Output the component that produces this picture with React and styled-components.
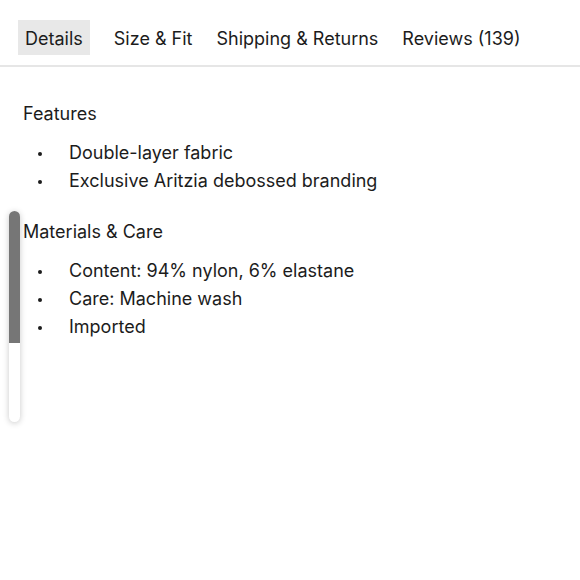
import React from "react";
import styled, { createGlobalStyle } from "styled-components";

const Global = createGlobalStyle`
  html, body { margin: 0; padding: 0; background: #fff; }
  body { font-family: "Inter", "Liberation Sans", sans-serif; color: #1c1c1c; }
`;

const Page = styled.div`
  position: relative;
  width: 580px;
  height: 580px;
  overflow: hidden;
  background: #fff;
`;

const TabBar = styled.nav`
  display: flex;
  align-items: center;
  gap: 24px;
  padding: 20px 0 10px 18px;
  border-bottom: 2px solid #e6e6e6;
`;

const Tab = styled.div`
  box-sizing: border-box;
  height: 35px;
  display: flex;
  align-items: center;
  padding: 2px ${(p) => (p.$active ? "7px" : "0")} 0;
  font-size: 18px;
  color: #1c1c1c;
  background: ${(p) => (p.$active ? "#e8e8e8" : "transparent")};
`;

const Content = styled.div`
  padding: 34px 0 0 23px;
`;

const Section = styled.section`
  margin-bottom: 25px;
`;

const Heading = styled.h3`
  margin: 0 0 11px;
  font-size: 18px;
  font-weight: 400;
  line-height: 26px;
  color: #1c1c1c;
`;

const List = styled.ul`
  margin: 0;
  padding: 0;
  list-style: none;
`;

const Item = styled.li`
  display: flex;
  align-items: center;
  height: 28px;
  font-size: 18px;
  color: #1c1c1c;
  &::before {
    content: "";
    width: 4px;
    height: 4px;
    border-radius: 50%;
    background: #1c1c1c;
    margin: 3px 27px 0 15px;
    flex: none;
  }
`;

const Scrollbar = styled.div`
  position: absolute;
  left: 9px;
  top: 211px;
  width: 11px;
  height: 211px;
  border-radius: 6px;
  background: #fff;
  box-shadow: 0 1px 6px rgba(0, 0, 0, 0.22);
  overflow: hidden;
`;

const Thumb = styled.div`
  height: 132px;
  background: #767676;
`;

const tabs = ["Details", "Size & Fit", "Shipping & Returns", "Reviews (139)"];

const sections = [
  { title: "Features", items: ["Double-layer fabric", "Exclusive Aritzia debossed branding"] },
  {
    title: "Materials & Care",
    items: ["Content: 94% nylon, 6% elastane", "Care: Machine wash", "Imported"],
  },
];

export default function App() {
  return (
    <Page>
      <Global />
      <TabBar>
        {tabs.map((t, i) => (
          <Tab key={t} $active={i === 0}>
            {t}
          </Tab>
        ))}
      </TabBar>
      <Content>
        {sections.map((s) => (
          <Section key={s.title}>
            <Heading>{s.title}</Heading>
            <List>
              {s.items.map((it) => (
                <Item key={it}>{it}</Item>
              ))}
            </List>
          </Section>
        ))}
      </Content>
      <Scrollbar>
        <Thumb />
      </Scrollbar>
    </Page>
  );
}
